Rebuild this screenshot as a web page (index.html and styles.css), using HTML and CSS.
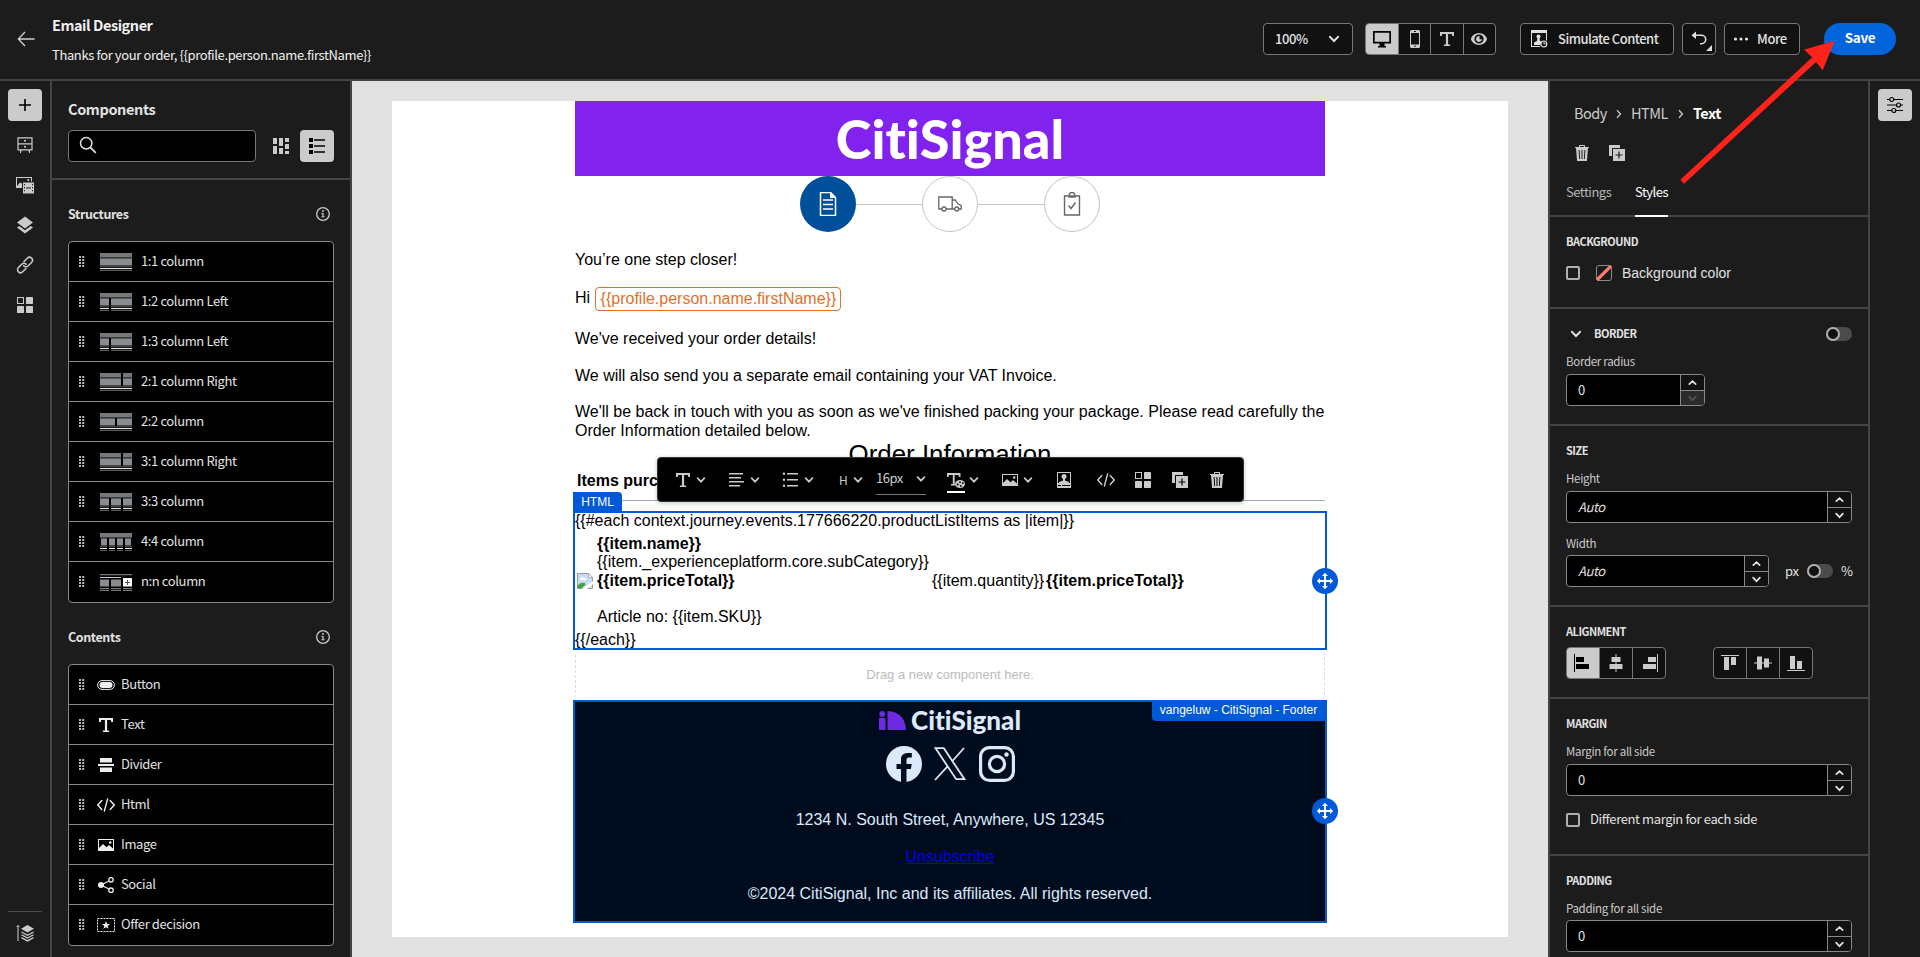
FILE: index.html
```html
<!DOCTYPE html>
<html lang="en">
<head>
<meta charset="utf-8">
<title>Email Designer</title>
<link rel="stylesheet" href="styles.css">
</head>
<body>
<svg class="defs" width="0" height="0">
  <symbol id="chev" viewBox="0 0 10 10"><path d="M1.6 3.2 5 6.7 8.4 3.2" fill="none" stroke="currentColor" stroke-width="1.7" stroke-linecap="round"/></symbol>
  <symbol id="chev-up" viewBox="0 0 10 10"><path d="M1.8 6.6 5 3.6 8.2 6.6" fill="none" stroke="currentColor" stroke-width="1.7" stroke-linecap="round"/></symbol>
  <symbol id="chev-r" viewBox="0 0 10 10"><path d="M3.4 1.6 6.4 5 3.4 8.4" fill="none" stroke="currentColor" stroke-width="1.4" stroke-linecap="round"/></symbol>
  <symbol id="text" viewBox="0 0 18 18"><path d="M2 2h14v4h-1.700l-.5-2h-3.700v10.500h2V16H5.900v-1.500h2V4H4.200l-.5 2H2z"/></symbol>
  <symbol id="trash" viewBox="0 0 18 18"><path fill-rule="evenodd" d="M6 3V1.500Q6 1 6.500 1h5Q12 1 12 1.500V3h4v1H15l-1 12.500q0 .5-.5.5h-9q-.5 0-.5-.5L3 4H2V3zM7 3h4V2H7zM5.600 6l.6 9h.9l-.5-9zM8.500 6v9h1V6zm2.900 0-.5 9h.9l.6-9z"/></symbol>
  <symbol id="dup" viewBox="0 0 18 18"><path d="M1 1h11v3H4v8H1z"/><path fill-rule="evenodd" d="M5 5h12v12H5zM10.400 7.500v2.900H7.500v1.200h2.900v2.900h1.200v-2.900h2.900v-1.200h-2.900V7.500z"/></symbol>
  <symbol id="code" viewBox="0 0 18 18"><path d="M4.800 4.500.8 9l4 4.500M13.200 4.500l4 4.500-4 4.500M10.600 3 7.400 15" fill="none" stroke="currentColor" stroke-width="1.400" stroke-linecap="round"/></symbol>
  <symbol id="image" viewBox="0 0 18 18"><path fill-rule="evenodd" d="M1 3h16v12H1zM2 4v8l4-4 3.500 3.200L12 9l4 3.500V4z"/><circle cx="13.200" cy="6.500" r="1.300"/></symbol>
  <symbol id="blocks" viewBox="0 0 18 18"><path fill-rule="evenodd" d="M1 1h7v7H1zM2 2v5h5V2z"/><rect x="10" y="1" width="7" height="7" rx=".4"/><rect x="1" y="10" width="7" height="7" rx=".4"/><rect x="10" y="10" width="7" height="7" rx=".4"/></symbol>
  <symbol id="info" viewBox="0 0 18 18"><circle cx="9" cy="9" r="6.300" fill="none" stroke="currentColor" stroke-width="1.300"/><circle cx="9" cy="6" r=".9"/><path d="M7.500 8H9.600v3.300h.9v.9H7.500v-.9h.9V8.900h-.9z"/></symbol>
  <symbol id="grip" viewBox="0 0 6 12"><path d="M0 0h2v2H0zM3.200 0h2v2h-2zM0 3h2v2H0zM3.200 3h2v2h-2zM0 6h2v2H0zM3.200 6h2v2h-2zM0 9h2v2H0zM3.200 9h2v2h-2z"/></symbol>
  <symbol id="move" viewBox="0 0 26 26"><path d="M13 4.800 16 8H14v4h4v-2l3.200 3-3.200 3v-2h-4v4h2l-3 3.200L10 18h2v-4H8v2l-3.200-3L8 10v2h4V8h-2z"/></symbol>
  <symbol id="layout" viewBox="0 0 32 20"><path fill="#777" d="M0 1h32v4.500H0z"/><path fill="#3d3d3d" d="M0 5.500h32v1H0z"/><path fill="#888c90" d="M0 6.500h32v7H0z"/><path fill="#5b5b5b" d="M0 14.200h32v1H0zM0 18h32v1H0z"/><path fill="#e6e6e6" d="M0 16h32v1.100H0z"/></symbol>
</svg>

<header class="topbar">
  <svg class="back" viewBox="0 0 18 18"><path d="M8 2 1.300 9 8 16M1.500 9H17.500" fill="none" stroke="#d0d0d0" stroke-width="1.300"/></svg>
  <div class="titles"><h1>Email Designer</h1><p>Thanks for your order, {{profile.person.name.firstName}}</p></div>
  <div class="btn zoom"><span>100%</span><svg><use href="#chev"/></svg></div>
  <div class="group views">
    <div class="on"><svg viewBox="0 0 18 18"><path fill-rule="evenodd" d="M0 1h18v12.500h-6.500V16H13v1.500H5V16h1.500v-2.500H0zM1.700 2.700V11.800h14.600V2.700z"/></svg></div>
    <div><svg viewBox="0 0 18 18"><path fill-rule="evenodd" d="M5.500 0h7q1.500 0 1.500 1.500v15q0 1.500-1.500 1.500h-7Q4 18 4 16.500v-15Q4 0 5.500 0zM5 3v11.500h8V3zm3-1.900v.8h2v-.8z"/><circle cx="9" cy="16.200" r=".8" fill="#101010"/></svg></div>
    <div><svg><use href="#text"/></svg></div>
    <div><svg viewBox="0 0 18 18"><path fill-rule="evenodd" d="M9 3c4.700 0 8 4 8 6s-3.300 6-8 6-8-4-8-6 3.300-6 8-6zM9 4.400a4.600 4.600 0 1 0 0 9.200 4.600 4.600 0 0 0 0-9.200z"/><path d="M9.500 6A3 3 0 1 0 12 9.300H9.500z"/></svg></div>
  </div>
  <div class="btn simulate"><svg viewBox="0 0 18 18"><path fill-rule="evenodd" d="M1 0h16v10.500h-1V3H2v13h8v1H1z"/><circle cx="8.500" cy="6.500" r="2"/><path d="M7.500 8h2l.5 3 2.500 1-2.500 3H4v-2.500L7 11z"/><circle cx="13.800" cy="14" r="3" fill="none" stroke="currentColor" stroke-width="1.200"/><path d="M13.500 12v2.300h2v-1h-1V12z"/></svg><span>Simulate Content</span></div>
  <div class="btn undo"><svg viewBox="0 0 18 18"><path d="M6 1.500v3h5.500a5 5 0 0 1 0 10H10V13h1.500a3.400 3.400 0 0 0 0-6.900H6V9L1.500 5.300z"/></svg><i></i></div>
  <div class="btn more"><svg viewBox="0 0 18 18"><circle cx="3.500" cy="9" r="1.600"/><circle cx="9" cy="9" r="1.600"/><circle cx="14.500" cy="9" r="1.600"/></svg><span>More</span></div>
  <div class="save">Save</div>
</header>

<main class="shell">
  <nav class="rail">
    <div class="tile"><svg viewBox="0 0 18 18"><path d="M8.200 3h1.600v5.200H15v1.600H9.800V15H8.200V9.800H3V8.200h5.200z"/></svg></div>
    <svg viewBox="0 0 18 18"><path d="M2 1.800h14v12H2zM2 7.800h14" fill="none" stroke="currentColor" stroke-width="1.200"/><path d="M8 4h2v1.500H8zM8 10h2v1.500H8zM4 14h1.500l-.5 3H4zM12.500 14H14v3h-1z"/></svg>
    <svg viewBox="0 0 18 18"><path d="M0 1h16v4.500h-1V2H1v8l3-3.500 2 1V12H0z"/><circle cx="12.300" cy="4" r="1.100"/><path fill-rule="evenodd" d="M7 6.500h11v11H7zM8 8v1.200h1V8zm0 3v1.200h1V11zm0 3v1.200h1V14zm8-6v1.200h1V8zm0 3v1.200h1V11zm0 3v1.200h1V14zm-6-2.500v.9h5v-.9z"/></svg>
    <svg viewBox="0 0 18 18"><path d="M9 .5 17 6.500 9 12.500 1 6.500zM3.200 10 9 14.300 14.800 10 17 11.500 9 17.500 1 11.500z"/></svg>
    <svg viewBox="0 0 18 18"><g fill="none" stroke="currentColor" stroke-width="1.500" stroke-linecap="round"><path d="M8 5.500 11.300 2.200a2.900 2.900 0 0 1 4.300 4.200L12 10a2.900 2.900 0 0 1-4.200-.3"/><path d="M10 12.500 6.700 15.800a2.900 2.900 0 0 1-4.300-4.200L6 8a2.900 2.900 0 0 1 4.200.3"/></g></svg>
    <svg><use href="#blocks"/></svg>
    <div class="rail-end"><svg viewBox="0 0 18 18"><path d="M11.500 1 18 4.800l-6.500 3.800L5 4.800z"/><path d="M2 1.500V17M.6 3 2 1.500 3.400 3" fill="none" stroke="currentColor"/><path d="m5.500 8 6 3.300 6-3.300M5.500 10.800l6 3.300 6-3.300M5.500 13.600l6 3.300 6-3.300" fill="none" stroke="currentColor" stroke-width="1.300"/></svg></div>
  </nav>

  <aside class="panel">
    <div class="panel-head">
      <h2>Components</h2>
      <div class="tools">
        <div class="search"><svg viewBox="0 0 18 18"><circle cx="7.200" cy="7.200" r="5.700" fill="none" stroke="currentColor" stroke-width="1.500"/><path d="m11.300 11.300 5.500 5.500" stroke="currentColor" stroke-width="1.700"/></svg></div>
        <svg class="mosaic" viewBox="0 0 18 18"><path d="M1 1h4v6H1zM1 9h4v8H1zM7 1h4v8H7zM7 11h4v6H7zM13 1h4v4h-4zM13 7h4v5h-4zM13 14h4v3h-4z"/></svg>
        <div class="tile"><svg viewBox="0 0 18 18"><path d="M1 1h4v4H1zM1 7h4v4H1zM1 13h4v4H1zM6 2.200h11v1.600H6zM6 8.200h11v1.600H6zM6 14.200h11v1.600H6z"/></svg></div>
      </div>
    </div>
    <div class="sect"><h3>Structures</h3><svg><use href="#info"/></svg></div>
    <ul class="list structures">
      <li><svg class="grip"><use href="#grip"/></svg><svg class="prev"><use href="#layout"/></svg>1:1 column</li>
      <li><svg class="grip"><use href="#grip"/></svg><svg class="prev"><use href="#layout"/><path d="M9 6h2v14H9z"/></svg>1:2 column Left</li>
      <li><svg class="grip"><use href="#grip"/></svg><svg class="prev"><use href="#layout"/><path d="M9 6h2v14H9z"/></svg>1:3 column Left</li>
      <li><svg class="grip"><use href="#grip"/></svg><svg class="prev"><use href="#layout"/><path d="M21 0h2v14h-2z"/></svg>2:1 column Right</li>
      <li><svg class="grip"><use href="#grip"/></svg><svg class="prev"><use href="#layout"/><path d="M15 6h2v8h-2z"/></svg>2:2 column</li>
      <li><svg class="grip"><use href="#grip"/></svg><svg class="prev"><use href="#layout"/><path d="M21 0h2v14h-2z"/></svg>3:1 column Right</li>
      <li><svg class="grip"><use href="#grip"/></svg><svg class="prev"><use href="#layout"/><path d="M9 6h2v14H9zM21 6h2v14h-2z"/></svg>3:3 column</li>
      <li><svg class="grip"><use href="#grip"/></svg><svg class="prev"><use href="#layout"/><path d="M0 6h1v8H0zM7 6h2v14H7zM15 6h2v14h-2zM23 6h2v14h-2zM31 6h1v8h-1z"/></svg>4:4 column</li>
      <li><svg class="grip"><use href="#grip"/></svg><svg class="prev"><g fill="#777"><path d="M0 2h32v1.300H0zM0 16h9v1.200H0zM11 16h10v1.200H11zM23 16h9v1.200h-9zM0 18h9v1H0zM11 18h10v1H11zM23 18h9v1h-9z"/></g><path fill="#ccc" d="M0 5h21v1H0z"/><path fill="#888c90" d="M0 7.500h9v7H0zM11 7.500h10v7H11z"/><path fill="#fff" d="M23 6h9v8.500h-9z"/><path fill="#555" d="M27 8h1v2h2v1h-2v2h-1v-2h-2v-1h2z"/></svg>n:n column</li>
    </ul>
    <div class="sect second"><h3>Contents</h3><svg><use href="#info"/></svg></div>
    <ul class="list contents">
      <li><svg class="grip"><use href="#grip"/></svg><svg class="ico" viewBox="0 0 18 18"><rect x=".6" y="4.600" width="16.800" height="8.800" rx="4.400" fill="none" stroke="currentColor" stroke-width="1"/><rect x="2.500" y="6" width="13" height="6" rx="3"/></svg>Button</li>
      <li><svg class="grip"><use href="#grip"/></svg><svg class="ico"><use href="#text"/></svg>Text</li>
      <li><svg class="grip"><use href="#grip"/></svg><svg class="ico" viewBox="0 0 18 18"><path d="M3 2h12v4.500H3zM1 8h16v2H1zM3 11.500h12V16H3z"/></svg>Divider</li>
      <li><svg class="grip"><use href="#grip"/></svg><svg class="ico"><use href="#code"/></svg>Html</li>
      <li><svg class="grip"><use href="#grip"/></svg><svg class="ico"><use href="#image"/></svg>Image</li>
      <li><svg class="grip"><use href="#grip"/></svg><svg class="ico" viewBox="0 0 18 18"><circle cx="4" cy="9" r="3"/><path d="M4 9 14 4M4 9l10 5" stroke="currentColor" stroke-width="1.300"/><circle cx="14" cy="3.800" r="2.200" fill="#000" stroke="currentColor" stroke-width="1.300"/><circle cx="14" cy="14.200" r="2.200" fill="#000" stroke="currentColor" stroke-width="1.300"/></svg>Social</li>
      <li><svg class="grip"><use href="#grip"/></svg><svg class="ico" viewBox="0 0 18 18"><rect x=".5" y="2.500" width="17" height="13" fill="none" stroke="currentColor" stroke-dasharray="2 1"/><path d="m9 5 1.100 2.900 3 .1-2.400 1.900.9 2.900L9 11.200l-2.600 1.600.9-2.900L4.900 8l3-.1z"/></svg>Offer decision</li>
    </ul>
  </aside>

  <section class="canvas">
    <div class="sheet">
      <div class="email">
        <div class="banner">CitiSignal</div>
        <div class="steps">
          <div class="step active"><svg viewBox="0 0 24 24"><path d="M4.500 .5H14.500L19.500 5.500V23.500H4.500z" stroke="#fff" fill="none" stroke-width="1.500"/><path d="M14 0v6h6z" fill="#fff"/><path d="M7 8h10M7 12.500h10M7 17h10" stroke="#fff" stroke-width="1.300"/></svg></div>
          <i></i>
          <div class="step"><svg viewBox="0 0 24 24"><g fill="none" stroke="#666" stroke-width="1.300"><path d="M4 17H.8V5h13.400v12H8M14.200 8h3l2.800 4 3.200 1.500V17H21M16.500 17h-2.300"/><circle cx="6" cy="17" r="2"/><circle cx="18.700" cy="17" r="2"/></g></svg></div>
          <i></i>
          <div class="step"><svg viewBox="0 0 24 24"><g fill="none" stroke="#666" stroke-width="1.400"><path d="M4.500 4h15v19h-15zM9 4q0-3.500 3-3.500T15 4v1H9z"/><path d="m8.500 13.500 2.500 3 4.500-6"/></g></svg></div>
        </div>
        <p class="lead">You’re one step closer!</p>
        <p class="hi">Hi <span>{{profile.person.name.firstName}}</span></p>
        <p>We've received your order details!</p>
        <p>We will also send you a separate email containing your VAT Invoice.</p>
        <p class="touch">We'll be back in touch with you as soon as we've finished packing your package. Please read carefully the Order Information detailed below.</p>
        <h2 class="order">Order Information</h2>
        <div class="items">Items purchased</div>
        <div class="htmlbox">
          <span class="tag">HTML</span>
          <div class="each">{{#each context.journey.events.177666220.productListItems as |item|}}</div>
          <div class="product">
            <svg class="broken" viewBox="0 0 16 16"><path d="M.5.500h11l4 4v11H.5z" fill="#c7dcf5" stroke="#999"/><path d="M1 15V12q4-4 8-1l-4 4z" fill="#45a33b"/><path d="M3 6q2-4 4-1 3 0 2 2H3z" fill="#fff"/><path d="M11.500.500v4h4z" fill="#fff" stroke="#999" stroke-width=".7"/><path d="M5 16 16 8v3l-6 5z" fill="#fff"/></svg>
            <div class="desc"><b>{{item.name}}</b><span>{{item._experienceplatform.core.subCategory}}</span><b>{{item.priceTotal}}</b><span class="art">Article no: {{item.SKU}}</span></div>
            <div class="qty">{{item.quantity}}</div><b class="price">{{item.priceTotal}}</b>
          </div>
          <div class="endeach">{{/each}}</div>
          <svg class="move"><use href="#move"/></svg>
        </div>
        <div class="drop">Drag a new component here.</div>
        <footer class="foot">
          <span class="tag">vangeluw - CitiSignal - Footer</span>
          <div class="logo"><svg viewBox="0 0 27 20"><path fill="#6d2ae2" d="M0 7h6.500v12H0zM8.500 0Q26 1 27 19H8.500z"/><circle cx="3.200" cy="3" r="2.900" fill="#6d2ae2"/></svg><span>CitiSignal</span></div>
          <div class="social">
            <svg viewBox="0 0 36 36"><circle cx="18" cy="18" r="18"/><path fill="#000c1d" d="M15 36V23h-4.500v-5H15v-4.500Q15 7 21.500 7h4.300v4.500H23q-2.500 0-2.500 2.500v4h5.200l-.8 5h-4.400v13z"/></svg>
            <svg class="x" viewBox="0 0 32 34"><path d="M1.500 1.200h8.300l20.700 31h-8.300zM30 1 18 14.500M14 18.800 1 33" fill="none" stroke="#dce9fb" stroke-width="1.800"/></svg>
            <svg viewBox="0 0 36 36"><g fill="none" stroke="#dce9fb" stroke-width="3.200"><rect x="1.600" y="1.600" width="32.800" height="32.800" rx="9"/><circle cx="18" cy="18" r="7.600"/></g><circle cx="27.500" cy="8.500" r="2.200"/></svg>
          </div>
          <p>1234 N. South Street, Anywhere, US 12345</p>
          <p><a>Unsubscribe</a></p>
          <p>©2024 CitiSignal, Inc and its affiliates. All rights reserved.</p>
          <svg class="move"><use href="#move"/></svg>
        </footer>

        <div class="toolbar">
          <div class="pair"><svg><use href="#text"/></svg><svg class="c"><use href="#chev"/></svg></div>
          <div class="pair"><svg viewBox="0 0 18 18"><path d="M1 2h14v1.500H1zM1 6h12v1.500H1zM1 10h15v1.500H1zM1 14h11v1.500H1z"/></svg><svg class="c"><use href="#chev"/></svg></div>
          <div class="pair"><svg viewBox="0 0 18 18"><circle cx="2" cy="2.800" r="1.200"/><circle cx="2" cy="8.800" r="1.200"/><circle cx="2" cy="14.800" r="1.200"/><path d="M5 2h11v1.600H5zM5 8h11v1.600H5zM5 14h11v1.600H5z"/></svg><svg class="c"><use href="#chev"/></svg></div>
          <div class="pair d"><span>H</span><svg class="c"><use href="#chev"/></svg></div>
          <div class="fontsize"><span>16px</span><svg class="c"><use href="#chev"/></svg></div>
          <div class="pair e"><svg class="color" viewBox="0 0 18 22"><path d="M0 2h13.500v4H12l-.5-2H7.700v9l.8 1.500H4V13h1.800V4H2l-.5 2H0z"/><ellipse cx="13" cy="13" rx="5" ry="4" /><g fill="#000"><circle cx="10.700" cy="13.500" r="1"/><circle cx="13" cy="11.200" r=".9"/><circle cx="15.800" cy="12.200" r=".9"/><circle cx="13.800" cy="15" r=".9"/></g><path d="M0 20h18v2H0z" fill="#fff"/></svg><svg class="c"><use href="#chev"/></svg></div>
          <div class="pair f"><svg><use href="#image"/></svg><svg class="c"><use href="#chev"/></svg></div>
          <svg class="one" viewBox="0 0 18 18"><path fill-rule="evenodd" d="M2 1h14v16H2zM3 2v10h12V2z"/><circle cx="9" cy="5.500" r="2.500"/><path d="M8 7h2v2.500l4 1.500v1.500H4V11l4-1.500z"/><path d="M3 14h3v1H3zM7 14h8v1H7z" fill="#000"/></svg>
          <svg class="one g"><use href="#code"/></svg>
          <svg class="one h"><use href="#blocks"/></svg>
          <svg class="one i"><use href="#dup"/></svg>
          <svg class="one j"><use href="#trash"/></svg>
        </div>
      </div>
    </div>
  </section>

  <aside class="props">
    <div class="phead">
      <div class="crumbs"><span class="c1">Body</span><svg><use href="#chev-r"/></svg><span class="c2">HTML</span><svg><use href="#chev-r"/></svg><b>Text</b></div>
      <div class="acts"><svg><use href="#trash"/></svg><svg><use href="#dup"/></svg></div>
      <div class="tabs"><span>Settings</span><span class="cur">Styles</span></div>
    </div>
    <div class="block bg"><h4>BACKGROUND</h4><div class="row"><i class="check"></i><svg class="swatch" viewBox="0 0 16 16"><rect x=".5" y=".5" width="15" height="15" rx="2.500" fill="none" stroke="#8a8a8a"/><path d="M2 14 14 2" stroke="#ff7b6b" stroke-width="3.200" stroke-linecap="square"/></svg><span class="helv">Background color</span></div></div>
    <div class="block border"><div class="bhead"><svg><use href="#chev"/></svg><h4>BORDER</h4><i class="toggle"></i></div><label>Border radius</label>
      <div class="num short"><span>0</span><div><svg><use href="#chev-up"/></svg><svg class="off"><use href="#chev"/></svg></div></div></div>
    <div class="block size"><h4>SIZE</h4><label>Height</label>
      <div class="num"><em>Auto</em><div><svg><use href="#chev-up"/></svg><svg><use href="#chev"/></svg></div></div>
      <label class="w">Width</label>
      <div class="wrow"><div class="num"><em>Auto</em><div><svg><use href="#chev-up"/></svg><svg><use href="#chev"/></svg></div></div><span>px</span><i class="toggle"></i><span>%</span></div></div>
    <div class="block align"><h4>ALIGNMENT</h4><div class="arow">
      <div class="group"><div class="on"><svg viewBox="0 0 18 18"><path d="M0 0h1v18H0zM2 3h8v5H2zM2 10h13v5H2z"/></svg></div><div><svg viewBox="0 0 18 18"><path d="M8.500 0h1v18h-1zM4.500 3h9v5h-9zM2.500 10h13v5h-13z"/></svg></div><div><svg viewBox="0 0 18 18"><path d="M17 0h1v18h-1zM8 3h8v5H8zM3 10h13v5H3z"/></svg></div></div>
      <div class="group"><div><svg viewBox="0 0 18 18"><path d="M0 1h18v1H0zM3 3h5v13H3zM10 3h5v8h-5z"/></svg></div><div><svg viewBox="0 0 18 18"><path d="M0 8.500h18v1H0zM3 2.500h5v13H3zM10 4.500h5v9h-5z"/></svg></div><div><svg viewBox="0 0 18 18"><path d="M0 16h18v1H0zM3 2h5v13H3zM10 7h5v8h-5z"/></svg></div></div></div></div>
    <div class="block margin"><h4>MARGIN</h4><label>Margin for all side</label>
      <div class="num"><span>0</span><div><svg><use href="#chev-up"/></svg><svg><use href="#chev"/></svg></div></div>
      <div class="row"><i class="check"></i><span>Different margin for each side</span></div></div>
    <div class="block padding"><h4>PADDING</h4><label>Padding for all side</label>
      <div class="num"><span>0</span><div><svg><use href="#chev-up"/></svg><svg><use href="#chev"/></svg></div></div></div>
  </aside>
  <nav class="rail right"><div class="tile"><svg viewBox="0 0 18 18"><g fill="none" stroke="currentColor" stroke-width="1.200"><path d="M1 3.500h2.500M8 3.500h9M1 9h9M15 9h2M1 14.500h4.500M10 14.500h7"/><circle cx="5.700" cy="3.500" r="2"/><circle cx="12.500" cy="9" r="2"/><circle cx="7.800" cy="14.500" r="2"/></g></svg></div></nav>
</main>

<svg class="arrow" viewBox="0 0 160 150"><path fill="#ff231c" d="M.3 143.700 132.300 21.300 124 13.700 154.700 4.700 142.700 34.300 136 26 4 147.700z"/></svg>
</body>
</html>
```

FILE: styles.css
```css
*, *::before { box-sizing: border-box; }
body { margin: 0; width: 1920px; height: 957px; overflow: hidden; display: flex; flex-direction: column; position: relative; background: #1c1c1c; color: #e2e2e2; font: 13px/18px "Noto Sans CJK SC", "Noto Sans", sans-serif; letter-spacing: -.38px; }
h1, h2, h3, h4, p, ul { margin: 0; padding: 0; list-style: none; }
svg { display: block; width: 18px; height: 18px; fill: currentColor; flex: none; }
.defs { position: absolute; width: 0; height: 0; }

/* top bar */
.topbar { flex: none; height: 81px; border-bottom: 2px solid #444; display: flex; align-items: flex-start; padding: 23px 24px 0 17px; }
.topbar .back { margin-top: 7px; }
.titles { margin: -8px auto 0 17px; color: #f0f0f0; }
.titles h1 { font-size: 14.500px; line-height: 20px; font-weight: 600; letter-spacing: -.45px; }
.titles p { margin-top: 11px; line-height: 18px; }
.btn { height: 32px; border: 1px solid #777; border-radius: 4px; background: #111; display: flex; align-items: center; color: #e2e2e2; }
.zoom { width: 90px; padding: 0 12px 0 11px; justify-content: space-between; font-weight: 500; margin-right: 12px; }
.zoom svg { width: 12px; height: 12px; }
.group { display: flex; height: 32px; border: 1px solid #777; border-radius: 4px; background: #111; overflow: hidden; color: #cbcbcb; }
.group > div { flex: 1; display: flex; align-items: center; justify-content: center; }
.group > div + div { border-left: 1px solid #777; }
.group .on { background: #cbcbcb; color: #000; flex: 0 0 32px; }
.views { width: 131px; margin-right: 24px; }
.simulate { width: 154px; padding-left: 9px; gap: 10px; margin-right: 8px; font-weight: 500; letter-spacing: -.5px; white-space: nowrap; }
.undo { width: 34px; justify-content: center; margin-right: 8px; position: relative; }
.undo i { position: absolute; right: 3px; bottom: 3px; border: 3px solid transparent; border-right-color: #ddd; border-bottom-color: #ddd; }
.more { width: 76px; padding-left: 7px; gap: 7px; margin-right: 24px; font-weight: 500; }
.save { width: 72px; height: 32px; border-radius: 16px; background: #0265dc; color: #fff; text-align: center; line-height: 28px; font-weight: 700; font-size: 13.500px; }

.shell { flex: 1; display: flex; min-height: 0; }
.rail { width: 52px; border-right: 2px solid #444; padding: 8px 0 0 8px; display: flex; flex-direction: column; gap: 22px; color: #cbcbcb; }
.rail > svg { margin-left: 8px; }
.tile { width: 34px; height: 32px; border-radius: 4px; background: #cbcbcb; color: #000; display: flex; align-items: center; justify-content: center; margin-bottom: -7px; flex: none; }
.rail-end { margin: auto 8px 15px 0; border-top: 1px solid #4b4b4b; padding: 12px 0 0 8px; }
.rail.right { width: 50px; border: 0; }

/* component library */
.panel { width: 300px; border-right: 2px solid #444; }
.panel-head { height: 99px; border-bottom: 2px solid #444; padding: 18px 16px 0; }
.panel h2 { font-size: 14.500px; line-height: 20px; font-weight: 600; }
.tools { display: flex; margin-top: 11px; align-items: center; }
.search { width: 188px; height: 32px; border: 1px solid #777; border-radius: 4px; background: #000; padding: 5px 10px; margin-right: 16px; }
.mosaic { color: #cbcbcb; margin-right: 10px; }
.tools .tile { margin: 0; }
.sect { display: flex; justify-content: space-between; align-items: center; padding: 0 18px 0 16px; margin-top: 24px; height: 20px; }
.sect h3 { font-size: 12.500px; line-height: 20px; font-weight: 600; letter-spacing: -.4px; }
.sect svg { color: #cbcbcb; }
.sect.second { margin-top: 24px; }
.list { margin: 17px 16px 0; border: 1px solid #888; border-radius: 4px; background: #000; overflow: hidden; }
.list li { display: flex; align-items: center; height: 40px; border-bottom: 1px solid #888; padding: 0 0 2px 10px; }
.list li:last-child { border: 0; }
.list .grip { width: 6px; height: 12px; margin-top: 2px; color: #bbb; }
.list .prev { width: 32px; height: 20px; margin: 2px 9px 0 15px; fill: #000; }
.list .ico { margin: 2px 6px 0 12px; color: #eee; }

/* canvas */
.canvas { width: 1196px; background: #e1e1e1; padding: 20px 40px; }
.sheet { height: 836px; background: #fff; color: #000; font: 16px/19px "Liberation Sans", Arial, sans-serif; letter-spacing: 0; }
.email { width: 750px; margin: 0 auto; position: relative; }
.banner { height: 75px; background: #8122ee; color: #fff; text-align: center; font: 900 54px/76px Lato, sans-serif; font-variant-ligatures: none; }
.steps { display: flex; justify-content: center; align-items: center; height: 56px; }
.step { width: 56px; height: 56px; border: 1px solid #c4c4c4; border-radius: 50%; display: flex; align-items: center; justify-content: center; }
.step svg { width: 24px; height: 24px; }
.step.active { background: #004f9a; border: 0; }
.steps i { width: 66px; height: 1px; background: #c4c4c4; }
.email p { margin-top: 18px; }
.email .hi { display: flex; height: 24px; line-height: 22px; white-space: pre; }
.hi span { border: 1px solid #e0702a; border-radius: 4px; color: #e0702a; padding: 0 4px 0 5px; line-height: 21px; }
.email .touch { margin-top: 17px; }
.order { margin-top: 1px; font-size: 25.900px; line-height: 26px; font-weight: 400; text-align: center; }
.items { margin-top: 4px; padding: 0 2px 10px; font-weight: 700; border-bottom: 1px solid #aaa; }
.htmlbox, .foot { border: 2px solid #0059d6; margin: 0 -2px; position: relative; }
.htmlbox { margin-top: 10px; height: 139px; }
.tag { position: absolute; background: #0059d6; color: #fff; font-size: 12px; }
.htmlbox .tag { left: -2px; top: -21px; width: 49px; height: 21px; line-height: 21px; text-align: center; border-radius: 0 4px 0 0; }
.each { line-height: 15px; height: 17px; }
.product { display: flex; align-items: center; height: 91px; margin-top: 5px; padding-left: 2px; line-height: 18px; }
.product .desc { width: 335px; display: flex; flex-direction: column; }
.desc b + span { line-height: 18px; padding-bottom: 1px; }
.desc .art { margin-top: 18px; }
.qty, .price { padding-top: 1px; }
.qty { margin-right: 2px; }
.product .broken { width: 16px; height: 16px; margin-right: 4px; }
.endeach { margin-top: 5px; line-height: 17px; }
.move { position: absolute; right: -13px; width: 26px; height: 26px; top: 55px; background: #0059d6; border-radius: 50%; color: #fff; }
.drop { height: 50px; line-height: 50px; border: dashed #ddd; border-width: 0 1px; border-radius: 5px; text-align: center; color: #bbb; font-size: 13px; }
.foot { height: 223px; background: #000c1d; color: #dce9fb; text-align: center; }
.foot .tag { right: -2px; top: -2px; width: 175px; height: 21px; padding-right: 2px; line-height: 20px; border-radius: 0 0 0 4px; }
.logo { display: flex; justify-content: center; gap: 5px; height: 37px; padding-top: 8px; }
.logo svg { width: 27px; height: 20px; margin-top: 1px; }
.logo span { font: 900 26px/27px Lato, sans-serif; font-variant-ligatures: none; margin-top: -3px; }
.social { display: flex; justify-content: center; align-items: center; gap: 12.500px; height: 36px; margin-top: 7px; }
.social svg { width: 36px; height: 36px; }
.social .x { width: 32px; height: 34px; }
.foot .social + p { margin-top: 28px; }
.foot a { color: #0000ee; text-decoration: underline; }
.foot .move { top: 96px; }

/* floating text toolbar */
.toolbar { position: absolute; left: 82px; top: 356px; width: 587px; height: 45px; border-radius: 4px; border: 1px solid #333; background: #000; color: #cbcbcb; display: flex; align-items: center; padding-left: 16px; box-shadow: 0 1px 4px rgba(0,0,0,.25); font: 13px/18px "Noto Sans CJK SC", sans-serif; letter-spacing: -.5px; }
.pair { display: flex; align-items: center; gap: 4px; width: 54px; }
.toolbar .c { width: 10px; height: 10px; }
.pair.d { width: 39px; padding-left: 2px; gap: 6px; font-size: 12px; margin-left: 1px; }
.fontsize { width: 50px; height: 31px; border-bottom: 1px solid #777; display: flex; align-items: center; justify-content: space-between; margin-right: 21px; }
.fontsize span { margin-top: -2px; }
.pair.e .color { height: 22px; margin-top: 5px; }
.pair.f { width: 50px; }
.toolbar .one { margin-left: 4px; }
.toolbar .g { margin-left: 24px; }
.toolbar .h { margin-left: 19px; }
.toolbar .i { margin-left: 19px; }
.toolbar .j { margin-left: 19px; }

/* property panel */
.props { width: 322px; border: solid #444; border-width: 0 2px; overflow: hidden; }
.phead { height: 136px; border-bottom: 2px solid #444; padding: 23px 16px 0; }
.crumbs { display: flex; align-items: center; height: 18px; padding-left: 8px; font-size: 14.500px; color: #cbcbcb; letter-spacing: -.5px; }
.crumbs svg { width: 10px; height: 10px; margin: 2px 7px 0; }
.crumbs .c1 { width: 33px; }
.crumbs .c2 { width: 38px; }
.crumbs b { color: #fff; }
.acts { display: flex; gap: 17px; padding-left: 7px; margin-top: 22px; color: #cbcbcb; }
.tabs { display: flex; gap: 25px; margin-top: 21px; color: #b5b5b5; white-space: nowrap; letter-spacing: -.5px; }
.tabs span { height: 34px; width: 44px; }
.tabs .cur { width: 33px; color: #fff; border-bottom: 2px solid #fff; }
.block { border-bottom: 2px solid #444; padding: 15px 16px 0; }
.block h4 { font-size: 11px; line-height: 18px; font-weight: 600; letter-spacing: -.5px; padding-bottom: 1px; }
.block label { display: block; font-size: 11.500px; line-height: 16px; color: #cbcbcb; letter-spacing: -.3px; }
.bg { height: 92px; }
.row { display: flex; align-items: center; }
.bg .row { margin-top: 13px; height: 18px; }
.check { width: 14px; height: 14px; border: 2px solid #b0b0b0; border-radius: 2px; flex: none; }
.swatch { width: 16px; height: 16px; margin: 0 10px 0 16px; }
.helv { font: 14px/18px "Liberation Sans", Arial, sans-serif; letter-spacing: 0; }
.border { height: 117px; }
.bhead { display: flex; align-items: center; height: 19px; padding-left: 4px; }
.bhead svg { width: 12px; height: 12px; margin-right: 12px; }
.toggle { width: 26px; height: 14px; border-radius: 7px; background: #4b4b4b; margin-left: auto; flex: none; }
.toggle::before { content: ""; display: block; width: 14px; height: 14px; border: 2px solid #b0b0b0; border-radius: 50%; background: #111; }
.border label { margin: 10px 0 5px; }
.num { display: flex; height: 32px; border: 1px solid #888; border-radius: 4px; background: #000; overflow: hidden; justify-content: space-between; flex: none; }
.num > span, .num > em { padding-left: 11px; line-height: 29px; }
.num > div { width: 24px; border-left: 1px solid #888; background: #111; display: flex; flex-direction: column; }
.num > div svg { width: 23px; height: 15px; padding: 2.500px 0; }
.num > div svg + svg { border-top: 1px solid #888; height: 16px; }
.num .off { background: #2b2b2b; color: #555; }
.num.short { width: 139px; }
.size { height: 181px; }
.size label { margin: 10px 0 5px; }
.size .w { margin: 12px 0 4px; }
.wrow { display: flex; align-items: center; }
.wrow .num { width: 203px; margin-right: 16px; }
.wrow .toggle { margin: 0 8px 0 8px; }
.wrow > span { width: 14px; }
.wrow > span:last-child { width: 11px; }
.align { height: 92px; }
.arow { display: flex; gap: 47px; margin-top: 6px; }
.arow .group { width: 100px; }
.margin { height: 157px; }
.margin label { margin: 10px 0 5px; }
.margin .row { margin-top: 15px; gap: 10px; height: 18px; }
.margin .row span { margin-top: -2px; }
.block.padding { border: 0; }
.padding label { margin: 10px 0 4px; }

.arrow { position: absolute; left: 1680px; top: 36px; width: 160px; height: 150px; }
```
